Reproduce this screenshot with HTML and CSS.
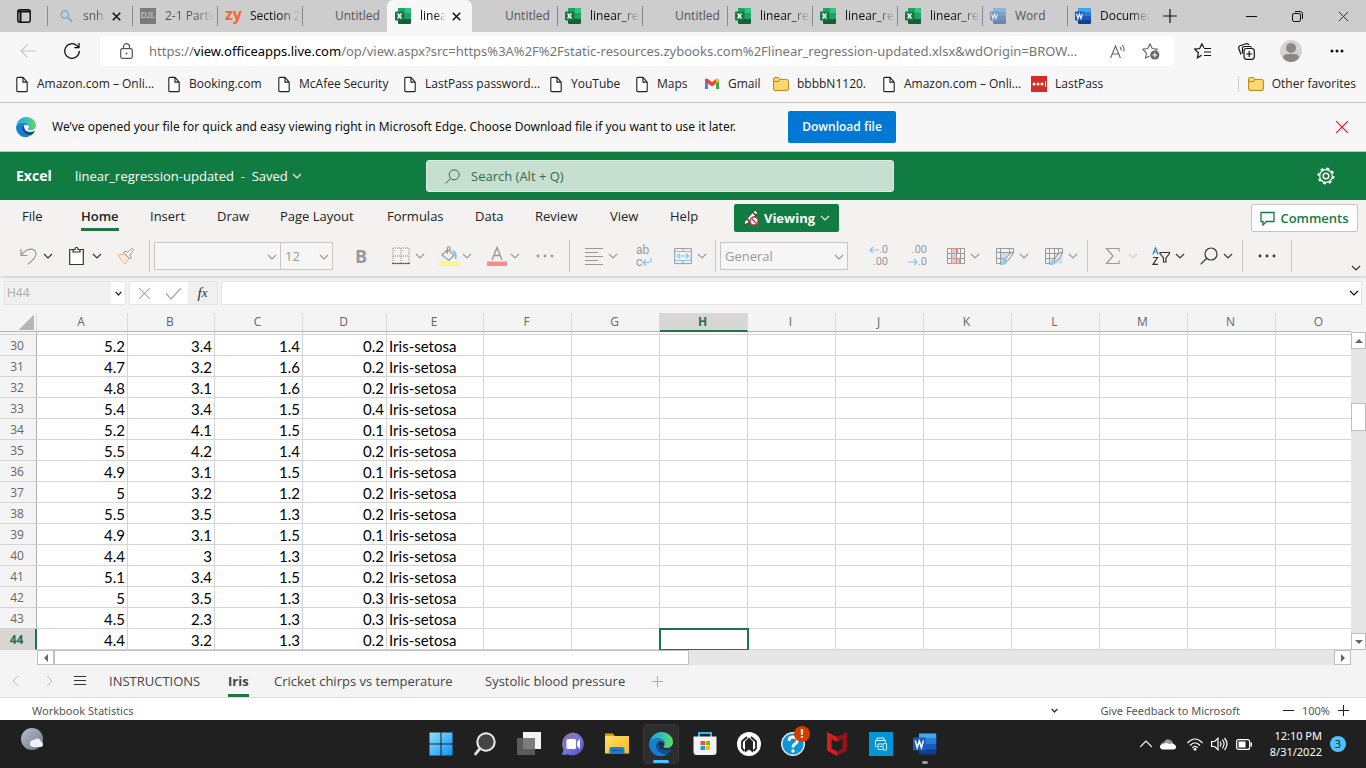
FILE: index.html
```html
<!DOCTYPE html>
<html lang="en">
<head>
<meta charset="utf-8">
<title>linear_regression-updated.xlsx</title>
<link rel="stylesheet" href="styles.css">
</head>
<body>
<svg class="defs" aria-hidden="true">
  <defs>
    <linearGradient id="win" x1="0" y1="0" x2="1" y2="1"><stop offset="0" stop-color="#8be0fb"/><stop offset="1" stop-color="#0d93f5"/></linearGradient>
    <linearGradient id="eg" x1="0" y1="0" x2="1" y2="0"><stop offset="0" stop-color="#1c9fe0"/><stop offset=".55" stop-color="#35c1b9"/><stop offset="1" stop-color="#62dc52"/></linearGradient>
    <linearGradient id="chat" x1="0" y1="0" x2="1" y2="1"><stop offset="0" stop-color="#9a6a9e"/><stop offset=".5" stop-color="#7478d6"/><stop offset="1" stop-color="#4f4fc4"/></linearGradient>
    <linearGradient id="fold" x1="0" y1="0" x2="1" y2="1"><stop offset="0" stop-color="#ffdf6b"/><stop offset="1" stop-color="#fbb81f"/></linearGradient>
    <linearGradient id="moon" x1="0" y1="0" x2="1" y2="1"><stop offset="0" stop-color="#b5bec9"/><stop offset="1" stop-color="#717b87"/></linearGradient>
  </defs>
  <symbol id="chev" viewBox="0 0 10 10"><path d="M1 3l4 4 4-4" fill="none" stroke="currentColor" stroke-width="1.2"/></symbol>
  <symbol id="x" viewBox="0 0 12 12"><path d="M1 1l10 10M11 1L1 11" fill="none" stroke="currentColor"/></symbol>
  <symbol id="page" viewBox="0 0 14 18"><path d="M1.500 2.500q0-1 1-1H8l4.500 5v9q0 1-1 1h-9q-1 0-1-1zM8 1.500v5h4.500" fill="#fff" stroke="#222" stroke-width="1.200"/></symbol>
  <symbol id="folder" viewBox="0 0 16 14"><path d="M.6 2q0-1.400 1.400-1.400h3.500L7 2.400h6.500q1.900 0 1.900 1.800V12q0 1.400-1.400 1.400H2Q.6 13.400.6 12z" fill="#ffd86f" stroke="#b8860b"/><path d="M.6 4.500h5L7 2.400" fill="none" stroke="#b8860b"/></symbol>
  <symbol id="excel" viewBox="0 0 16 16"><rect x="3" width="13" height="16" rx="1" fill="#185c37"/><path d="M3 0h6.500v5.500H3z" fill="#21a366"/><path d="M9.500 0H15q1 0 1 1v4.500H9.500z" fill="#33c481"/><path d="M3 5.500h6.500V11H3z" fill="#107c41"/><path d="M9.500 5.500H16V11H9.500z" fill="#21a366"/><rect y="3.500" width="9" height="9" rx=".8" fill="#107c41"/><path d="M2.600 5.500l3.800 5M6.400 5.500l-3.800 5" stroke="#fff" stroke-width="1.500"/></symbol>
  <symbol id="word" viewBox="0 0 16 16"><rect x="3" width="13" height="16" rx="1" fill="#103f91"/><path d="M3 1q0-1 1-1h11q1 0 1 1v3H3z" fill="#41a5ee"/><path d="M3 4h13v4H3z" fill="#2b7cd3"/><path d="M3 8h13v4H3z" fill="#185abd"/><rect y="3.500" width="9" height="9" rx=".8" fill="#185abd"/><path d="M1.500 5.600l1.500 5 1.500-4.600L6 10.600l1.500-5" fill="none" stroke="#fff" stroke-width="1.200"/></symbol>
  <symbol id="edge" viewBox="0 0 24 24"><path d="M0 12C1 5 6 0 12 0c7 0 12 4.500 12 10 0 4-3 6-6.500 6-2.500 0-3.500-1-3-2 1-1 1-2 1-2.500C15.500 8 12 6.500 9 6.500 4 6.500 1 9 0 12z" fill="url(#eg)"/><path d="M0 12C1.500 8 5 6.500 9 6.500c4 0 6.300 2.200 6.400 5-.2-1.300-3-3-5.400-2-2 1-3 4-2 7.500 2 4 6 5.500 10 5C13.500 25.500 6 24.500 3 20 .8 17.500 0 15 0 12z" fill="#1380d8"/><path d="M9.500 9.500C7 11 6.500 14 8 17c2 4 6 5.500 10 5 2-1 4-3 4.500-4.500.2-.6-.4-.8-1-.4-3 1.600-8 1.200-10-1.100-1.700-2-1.800-4.500-2-6.500z" fill="#124e96"/></symbol>
  <symbol id="dots" viewBox="0 0 18 4"><g fill="currentColor"><circle cx="2" cy="2" r="1.400"/><circle cx="9" cy="2" r="1.400"/><circle cx="16" cy="2" r="1.400"/></g></symbol>
  <symbol id="glass" viewBox="0 0 18 18"><g fill="none" stroke="currentColor" stroke-width="1.200"><circle cx="11" cy="7" r="6"/><path d="M6.500 11.500L.6 17.400"/></g></symbol>
  <symbol id="brush" viewBox="0 0 18 18"><path d="M17 5q-3 0-8 8l2 1.500Q17 9 17 5z" fill="#eee" stroke="#8f8f8f"/><path d="M8.500 12.500q-2 .5-2.500 2.500t-2 2.500q5 1.200 7-3z" fill="#9fc9ea" stroke="#82b4dc" stroke-width=".6"/></symbol>
</svg>

<header class="browser">
  <div class="tabstrip">
    <button class="tab-actions" aria-label="Tab actions"><svg width="14" height="14" viewBox="0 0 14 14"><rect x=".8" y=".8" width="12.400" height="12.400" rx="2" fill="none" stroke="#111" stroke-width="1.500"/><path d="M1 2.500h12M3.500 2v11" stroke="#111" stroke-width="2"/></svg></button>
    <nav class="tabs" id="tabs" aria-label="Browser tabs">
      <div class="tab first"><svg class="fav" viewBox="0 0 16 16"><circle cx="7" cy="6.500" r="3.700" fill="none" stroke="#7fa8d6" stroke-width="1.500"/><path d="M10 9.500l4 4" stroke="#7fa8d6" stroke-width="2"/></svg><a href="#" class="dim">snh</a><button aria-label="Close tab"><svg width="9" height="9" viewBox="0 0 12 12"><path d="M1 1l10 10M11 1L1 11" stroke="#111" stroke-width="2"/></svg></button></div>
      <div class="tab"><span class="fav d2l">D2L</span><a href="#" class="dim">2-1 Partic</a></div>
      <div class="tab"><span class="fav zy">zy</span><a href="#">Section 2</a></div>
      <div class="tab"><span class="fav"></span><a href="#" class="dim">Untitled</a></div>
      <div class="tab active"><svg class="fav"><use href="#excel"/></svg><a href="#">linea</a><button aria-label="Close tab"><svg width="9" height="9" viewBox="0 0 12 12"><path d="M1 1l10 10M11 1L1 11" stroke="#111" stroke-width="2"/></svg></button></div>
      <div class="tab after"><span class="fav"></span><a href="#" class="dim">Untitled</a></div>
      <div class="tab"><svg class="fav"><use href="#excel"/></svg><a href="#">linear_reg</a></div>
      <div class="tab"><span class="fav"></span><a href="#" class="dim">Untitled</a></div>
      <div class="tab"><svg class="fav"><use href="#excel"/></svg><a href="#">linear_reg</a></div>
      <div class="tab"><svg class="fav"><use href="#excel"/></svg><a href="#">linear_reg</a></div>
      <div class="tab"><svg class="fav"><use href="#excel"/></svg><a href="#">linear_reg</a></div>
      <div class="tab whole"><svg class="fav faded"><use href="#word"/></svg><a href="#" class="dim">Word</a></div>
      <div class="tab"><svg class="fav"><use href="#word"/></svg><a href="#">Documen</a></div>
    </nav>
    <button class="new-tab" aria-label="New tab"><svg width="14" height="14" viewBox="0 0 14 14"><path d="M7 0v14M0 7h14" stroke="#111" stroke-width="1.200"/></svg></button>
    <div class="window-buttons">
      <button aria-label="Minimize"><svg width="11" height="11"><path d="M0 5.500h11" stroke="#111"/></svg></button>
      <button aria-label="Restore"><svg width="11" height="11"><rect x=".5" y="2.500" width="8" height="8" rx="1.500" fill="none" stroke="#111"/><path d="M3 .5h5q2.500 0 2.500 2.500v5" fill="none" stroke="#111"/></svg></button>
      <button aria-label="Close"><svg width="11" height="11"><use href="#x"/></svg></button>
    </div>
  </div>

  <div class="navbar">
    <button aria-label="Back"><svg width="16" height="14" viewBox="0 0 16 14"><path d="M16 7H1M7.500.5L1 7l6.500 6.500" fill="none" stroke="#c8c8c8" stroke-width="1.200"/></svg></button>
    <button aria-label="Refresh"><svg width="18" height="18" viewBox="0 0 18 18"><path d="M16.300 9A7.300 7.300 0 1 1 14 3.700L16 5.500M16 1v4.700h-4.700" fill="none" stroke="#111" stroke-width="1.300"/></svg></button>
    <div class="address">
      <svg width="13" height="16" viewBox="0 0 13 16"><path d="M3.500 6V3.700a3 3 0 0 1 6 0V6" fill="none" stroke="#555" stroke-width="1.200"/><rect x=".7" y="5.700" width="11.600" height="9.600" rx="1.500" fill="none" stroke="#555" stroke-width="1.200"/><circle cx="6.500" cy="10.500" r="1" fill="#555"/></svg>
      <p class="url">https://<b>view.officeapps.live.com</b>/op/view.aspx?src=https%3A%2F%2Fstatic-resources.zybooks.com%2Flinear_regression-updated.xlsx&amp;wdOrigin=BROW...</p>
      <button aria-label="Read aloud"><svg width="16" height="15" viewBox="0 0 16 15"><path d="M.6 14L5.500 2l4.900 12M2.300 10h6.400M10 3q1.500 1.500 1 3.500M12 1.200q3 2.600 1.600 6.300" fill="none" stroke="#666" stroke-width="1.100"/></svg></button>
      <button aria-label="Add to favorites"><svg width="18" height="17" viewBox="0 0 18 17"><path d="M7.500 13L3.500 15.100l.9-5L.8 6.200l5-.7L8 .9l2.200 4.600 5 .7-1.500 1.500" fill="none" stroke="#666" stroke-width="1.100"/><circle cx="12.800" cy="12" r="4.600" fill="#666"/><path d="M12.800 9.500v5M10.300 12h5" stroke="#fff"/></svg></button>
    </div>
    <button aria-label="Favorites"><svg width="17" height="16" viewBox="0 0 17 16"><path d="M10 4.800L7.800.9 5.700 5.500l-5 .6 3.700 3.700-1 5 4.300-2.600" fill="none" stroke="#111" stroke-width="1.200"/><path d="M10 5.500h7M10 9h7M10 12.500h7" stroke="#111" stroke-width="1.200"/></svg></button>
    <button aria-label="Collections"><svg width="17" height="17" viewBox="0 0 17 17"><g fill="none" stroke="#111" stroke-width="1.200"><path d="M3 11.500L.8 5.500Q.3 3.500 2 2.800L8 .8q2-.5 3 1.200M4.500 10.500V5.500q0-2 2-2h5.500q1 0 1.500 1"/><rect x="6" y="5.500" width="10.300" height="10.800" rx="2.500"/><path d="M11.200 8v6M8.200 11h6"/></g></svg></button>
    <button aria-label="Profile"><svg width="22" height="22" viewBox="0 0 22 22"><circle cx="11" cy="11" r="11" fill="#d5d3d0"/><circle cx="11" cy="8" r="5" fill="#8b8986"/><path d="M3 18q0-4 5-4h6q5 0 5 4-3.500 4-8 4t-8-4z" fill="#8b8986"/></svg></button>
    <button aria-label="Settings and more"><svg width="14" height="4" viewBox="0 0 14 4"><g fill="#111"><circle cx="2" cy="2" r="1.500"/><circle cx="7" cy="2" r="1.500"/><circle cx="12" cy="2" r="1.500"/></g></svg></button>
  </div>

  <nav class="bookmarks" aria-label="Favorites bar">
    <a href="#"><svg class="pg"><use href="#page"/></svg>Amazon.com – Onli...</a>
    <a href="#"><svg class="pg"><use href="#page"/></svg>Booking.com</a>
    <a href="#"><svg class="pg"><use href="#page"/></svg>McAfee Security</a>
    <a href="#"><svg class="pg"><use href="#page"/></svg>LastPass password...</a>
    <a href="#"><svg class="pg"><use href="#page"/></svg>YouTube</a>
    <a href="#"><svg class="pg"><use href="#page"/></svg>Maps</a>
    <a href="#"><svg class="ic" viewBox="0 0 16 16"><path d="M1 3.500V13h3V7z" fill="#4285f4"/><path d="M15 3.500V13h-3V7z" fill="#34a853"/><path d="M1 3.200Q2.500 1.800 4 3l4 3.200L12 3v4.500L8 10.500 4 7.500 1 5z" fill="#ea4335"/><path d="M12 3q1.600-1.300 3 .3V5l-3 2.500z" fill="#fbbc04"/></svg>Gmail</a>
    <a href="#"><svg class="ic"><use href="#folder"/></svg>bbbbN1120.</a>
    <a href="#"><svg class="pg"><use href="#page"/></svg>Amazon.com – Onli...</a>
    <a href="#"><svg class="ic" viewBox="0 0 16 16"><path d="M0 0h16v16H0z" fill="#d32d27"/><g fill="#fff"><circle cx="3" cy="8" r="1.500"/><circle cx="7" cy="8" r="1.500"/><circle cx="11" cy="8" r="1.500"/><path d="M14 5h1v6h-1z"/></g></svg>LastPass</a>
    <a href="#" class="other"><svg class="ic"><use href="#folder"/></svg>Other favorites</a>
  </nav>
</header>

<section class="notice">
  <svg width="20" height="20"><use href="#edge"/></svg>
  <p>We’ve opened your file for quick and easy viewing right in Microsoft Edge. Choose Download file if you want to use it later.</p>
  <button class="download">Download file</button>
  <button class="dismiss" aria-label="Dismiss"><svg width="14" height="14"><use href="#x"/></svg></button>
</section>

<header class="titlebar">
  <b>Excel</b>
  <button class="doc">linear_regression-updated&nbsp; -&nbsp; Saved <svg width="10" height="10"><use href="#chev"/></svg></button>
  <label class="search"><svg width="15" height="15"><use href="#glass"/></svg><input type="search" placeholder="Search (Alt + Q)" aria-label="Search"></label>
  <button class="gear" aria-label="Settings"><svg width="18" height="18" viewBox="0 0 18 18"><g fill="none" stroke="#fff"><circle cx="9" cy="9" r="2.800" stroke-width="1.400"/><circle cx="9" cy="9" r="6.300" stroke-width="1.200"/><circle cx="9" cy="9" r="7.600" stroke-width="1.800" stroke-dasharray="3 2.970"/></g></svg></button>
</header>

<section class="ribbon">
  <nav class="menu" aria-label="Ribbon tabs">
    <a href="#">File</a><a href="#" class="current"><span>Home</span></a><a href="#">Insert</a><a href="#">Draw</a><a href="#">Page Layout</a><a href="#">Formulas</a><a href="#">Data</a><a href="#">Review</a><a href="#">View</a><a href="#">Help</a>
    <button class="viewing"><svg width="16" height="16" viewBox="0 0 16 16"><path d="M1 15l1-4L11 1q2-1 3 1t-1 3L5 13z" fill="#fff" stroke="#333" stroke-width=".8"/><path d="M4 9l3 3M10 2.500l3 3" stroke="#333" stroke-width="1.500"/><circle cx="11" cy="11" r="4" fill="#fff" stroke="#d13438" stroke-width="1.400"/><path d="M8.500 8.500l5 5" stroke="#d13438" stroke-width="1.400"/></svg>Viewing<svg class="c"><use href="#chev"/></svg></button>
    <button class="comments"><svg width="15" height="15" viewBox="0 0 15 15"><path d="M1 1.500h13v9H6.500L3 14v-3.500H1z" fill="none" stroke="#107c41" stroke-width="1.300"/></svg>Comments</button>
  </nav>
  <div class="tools">
    <button class="tool" aria-label="Undo"><svg class="i off" viewBox="0 0 18 18"><path d="M1 2v6.500h6.500M1.300 8Q6 2.500 10 2.200c4 0 6 2.300 6 5 0 3-3 6-8 10" fill="none" stroke="currentColor" stroke-width="1.200"/></svg><svg class="c"><use href="#chev"/></svg></button>
    <button class="tool" aria-label="Paste"><svg class="i" viewBox="0 0 18 18"><path d="M4 2.500H.7v15h13.600v-15H11M4 5V2.500h2q0-2 1.500-2t1.500 2h2V5z" fill="#fff" stroke="#333" stroke-width="1.200"/></svg><svg class="c"><use href="#chev"/></svg></button>
    <button class="tool" aria-label="Format painter"><svg class="i" viewBox="0 0 18 18"><path d="M1 8l6.500-1 4.500 4.500Q10 14 8 17q-3-2-7-9z" fill="#fde8d5" stroke="#e8b78d"/><path d="M6.500 5.500l6.500 6.500 1-2-1.300-2 4-5-1.700-1.700-4.500 4L8 4z" fill="#f5f5f5" stroke="#999"/></svg></button>
    <i class="sep"></i>
    <div class="combo"><select aria-label="Font" disabled><option></option></select><svg class="c"><use href="#chev"/></svg></div>
    <div class="combo size"><select aria-label="Font size" disabled><option>12</option></select><svg class="c"><use href="#chev"/></svg></div>
    <button class="tool bold off">B</button>
    <button class="tool off" aria-label="Borders"><svg class="i" viewBox="0 0 18 18"><path d="M1 1h16M1 9h16M1 1v15M9 1v15M17 1v15" stroke="#888" stroke-dasharray="1 1"/><path d="M0 16.500h18" stroke="#666" stroke-width="1.200"/></svg><svg class="c"><use href="#chev"/></svg></button>
    <button class="tool off" aria-label="Fill color"><svg class="i w" viewBox="0 0 20 20"><path d="M3 9l5.500-5.500L15 9l-5 5.500zM8.500 8V1.500q1.500-1.500 2.500 0V6" fill="none" stroke="#999" stroke-width="1.200"/><path d="M13 5q4.500 0 3.500 8" fill="none" stroke="#8dbce2" stroke-width="2"/><path d="M0 15.500h20v4.500H0z" fill="#fbf58d"/></svg><svg class="c"><use href="#chev"/></svg></button>
    <button class="tool off" aria-label="Font color"><svg class="i w" viewBox="0 0 20 20"><path d="M5 14L10 1.500 15 14M7 9.500h6" fill="none" stroke="#999" stroke-width="1.400"/><path d="M0 15.500h20v4.500H0z" fill="#f78d8d"/></svg><svg class="c"><use href="#chev"/></svg></button>
    <button class="tool off" aria-label="More font options"><svg width="18" height="4"><use href="#dots"/></svg></button>
    <i class="sep"></i>
    <button class="tool off" aria-label="Align"><svg class="i" viewBox="0 0 18 18"><path d="M0 1.500h18M0 5.500h13M0 9.500h18M0 13.500h13M0 17.500h18" stroke="#999"/></svg><svg class="c"><use href="#chev"/></svg></button>
    <button class="tool off wrap" aria-label="Wrap text"><span>ab</span><span>c<svg width="10" height="8" viewBox="0 0 10 8"><path d="M9 0q1 4-3 4.500H1M4 1.500l-3 3 3 3" fill="none" stroke="#8dc3ea" stroke-width="1.200"/></svg></span></button>
    <button class="tool off" aria-label="Merge"><svg class="i" viewBox="0 0 18 18"><path d="M.6 1.600h16.800v15H.6zM9 1.500v15" fill="none" stroke="#999"/><path d="M1 4.500h16v9H1z" fill="#f3f2f1" stroke="#8dc3ea"/><path d="M3.500 9h11M6 6.500L3.500 9 6 11.500M12 6.500L14.500 9 12 11.500" fill="none" stroke="#8dc3ea" stroke-width="1.200"/></svg><svg class="c"><use href="#chev"/></svg></button>
    <i class="sep"></i>
    <div class="combo general"><select aria-label="Number format" disabled><option>General</option></select><svg class="c"><use href="#chev"/></svg></div>
    <button class="tool off dec" aria-label="Decrease decimal"><span><svg width="10" height="8" viewBox="0 0 10 8"><path d="M10 4H1M4 1L1 4l3 3" fill="none" stroke="#8dc3ea" stroke-width="1.200"/></svg>.0</span><span>.00</span></button>
    <button class="tool off dec" aria-label="Increase decimal"><span>.00</span><span><svg width="10" height="8" viewBox="0 0 10 8"><path d="M0 4h9M6 1l3 3-3 3" fill="none" stroke="#8dc3ea" stroke-width="1.200"/></svg>.0</span></button>
    <button class="tool off" aria-label="Conditional formatting"><svg class="i" viewBox="0 0 18 18"><path d="M5 1h5v5H5zM4 11h8v6H4z" fill="#f9c3c3"/><path d="M5 6h4v5H5z" fill="#b5d6ef"/><path d="M.5 1.500h17v15H.5zM.5 6.500h17M.5 11.500h17M4.500 1.500v15M9.500 1.500v15M13.500 1.500v15" fill="none" stroke="#999"/><path d="M4.500 1.500h6v5h-6zM4.500 11.500h8v5h-8z" fill="none" stroke="#e88"/></svg><svg class="c"><use href="#chev"/></svg></button>
    <button class="tool off" aria-label="Format as table"><svg class="i" viewBox="0 0 18 18"><path d="M4.500 5.500h9v8h-9z" fill="#c5def2"/><path d="M8 16.500H.5v-15h17v5M.5 5.500h17M.5 11.500h8M4.500 1.500v15M13.500 1.500v6" fill="none" stroke="#999"/><use href="#brush"/></svg><svg class="c"><use href="#chev"/></svg></button>
    <button class="tool off" aria-label="Cell styles"><svg class="i" viewBox="0 0 18 18"><path d="M9 6.500h8.500v10H9z" fill="#c5def2"/><path d="M8 16.500H.5v-15h17v5M.5 6.500h17M.5 11.500h12M4.500 1.500v15M9.500 1.500v12M13.500 1.500v6" fill="none" stroke="#999"/><use href="#brush"/></svg><svg class="c"><use href="#chev"/></svg></button>
    <i class="sep"></i>
    <button class="tool off pale" aria-label="AutoSum"><svg class="i" viewBox="0 0 18 18"><path d="M14 4.500v-3H1.500l6.500 7.500-6.500 7.500H14v-3" fill="none" stroke="#999" stroke-width="1.200"/></svg><svg class="c"><use href="#chev"/></svg></button>
    <button class="tool" aria-label="Sort and filter"><svg class="i" viewBox="0 0 18 18"><path d="M.8 7.500L3.500.7l2.700 6.800M1.800 5h3.500" fill="none" stroke="#2b88d8" stroke-width="1.200"/><path d="M1 10.500h4.500L1 17.300h5M8 5.500h9.500v1l-3.500 4.500v4h-2.500v-4L8 6.500z" fill="none" stroke="#333" stroke-width="1.200"/></svg><svg class="c"><use href="#chev"/></svg></button>
    <button class="tool" aria-label="Find"><svg class="i"><use href="#glass"/></svg><svg class="c"><use href="#chev"/></svg></button>
    <i class="sep"></i>
    <button class="tool" aria-label="More commands"><svg width="18" height="4"><use href="#dots"/></svg></button>
    <i class="sep"></i>
    <button class="tool collapse" aria-label="Collapse ribbon"><svg class="c"><use href="#chev"/></svg></button>
  </div>
</section>

<main class="workbook">
  <div class="formula-row">
    <div class="namebox"><input value="H44" aria-label="Name box" disabled><button aria-label="Named ranges"><svg width="7" height="7" viewBox="0 0 10 10"><path d="M1 3l4 4 4-4" fill="none" stroke="#333" stroke-width="2"/></svg></button></div>
    <div class="fx-buttons">
      <button aria-label="Cancel"><svg width="13" height="13" viewBox="0 0 12 12"><path d="M1 1l10 10M11 1L1 11" stroke="#aaa"/></svg></button>
      <button aria-label="Enter"><svg width="17" height="13" viewBox="0 0 17 13"><path d="M1 6.500L6 12 16 1" fill="none" stroke="#aaa" stroke-width="1.300"/></svg></button>
      <button class="fx" aria-label="Insert function">f<small>x</small></button>
    </div>
    <div class="formula"><input aria-label="Formula bar"><button aria-label="Expand formula bar"><svg class="c"><use href="#chev"/></svg></button></div>
  </div>

  <div class="sheet">
    <div class="cells">
      <table>
        <colgroup><col class="cr"><col class="ca"><col class="cb"><col class="cc"><col class="cd"><col class="ce"><col span="10" class="cf"></colgroup>
        <thead><tr id="letters"><th class="corner" aria-label="Select all"></th></tr></thead>
        <tbody id="rows"></tbody>
      </table>
    </div>
    <div class="vscroll"><button aria-label="Scroll up"><i class="up"></i></button><i class="vthumb"></i><button aria-label="Scroll down"><i class="down"></i></button></div>
  </div>
  <div class="hscroll"><button aria-label="Scroll left"><i class="left"></i></button><i class="hthumb"></i><button aria-label="Scroll right"><i class="right"></i></button></div>

  <nav class="sheet-tabs" aria-label="Sheets">
    <button aria-label="Previous sheet"><svg width="7" height="12" viewBox="0 0 7 12"><path d="M6 1L1 6l5 5" fill="none" stroke="#bbb"/></svg></button>
    <button aria-label="Next sheet"><svg width="7" height="12" viewBox="0 0 7 12"><path d="M1 1l5 5-5 5" fill="none" stroke="#bbb"/></svg></button>
    <button aria-label="All sheets"><svg width="12" height="10"><path d="M0 .5h12M0 4.500h12M0 8.500h12" stroke="#333"/></svg></button>
    <a href="#">INSTRUCTIONS</a><a href="#" class="current"><span>Iris</span></a><a href="#">Cricket chirps vs temperature</a><a href="#">Systolic blood pressure</a>
    <button aria-label="Add sheet"><svg width="11" height="11"><path d="M5.500 0v11M0 5.500h11" stroke="#aaa"/></svg></button>
  </nav>
</main>

<footer class="status">
  <a href="#">Workbook Statistics</a>
  <button class="caret" aria-label="Status options"><svg width="7" height="7" viewBox="0 0 10 10"><path d="M1 3l4 4 4-4" fill="none" stroke="#333" stroke-width="2"/></svg></button>
  <a href="#">Give Feedback to Microsoft</a>
  <div class="zoom"><button aria-label="Zoom out"><svg width="11" height="11"><path d="M0 5.500h11" stroke="#222"/></svg></button><span>100%</span><button aria-label="Zoom in"><svg width="11" height="11"><path d="M5.500 0v11M0 5.500h11" stroke="#222"/></svg></button></div>
</footer>

<footer class="taskbar">
  <button class="weather" aria-label="Weather"><svg width="24" height="24" viewBox="0 0 24 24"><circle cx="11" cy="11" r="11" fill="url(#moon)"/><path d="M12 19a3.500 3.500 0 0 1 1-7 4 4 0 0 1 7 1.500 3 3 0 0 1 .5 5.500z" fill="#eef0f2"/></svg></button>
  <div class="apps">
    <button aria-label="Start"><svg viewBox="0 0 24 24"><path d="M.5.500h11v11H.5zM12.500.500h11v11h-11zM.5 12.500h11v11H.5zM12.500 12.500h11v11h-11z" fill="url(#win)"/></svg></button>
    <button aria-label="Search"><svg viewBox="0 0 24 24"><circle cx="13" cy="10" r="8.700" fill="#444" stroke="#eee" stroke-width="2"/><path d="M7 16.500L2.500 22" stroke="#ddd" stroke-width="2.800" stroke-linecap="round"/></svg></button>
    <button aria-label="Task view"><svg viewBox="0 0 24 24"><path d="M6 0h18v17H6z" fill="#f3f3f3"/><path d="M0 6h18v17H0z" fill="#666" opacity=".85"/></svg></button>
    <button aria-label="Chat"><svg viewBox="0 0 24 24"><path d="M12 .5a11.400 11.400 0 1 1-5 21.900L1 23l1.500-5.500A11.400 11.400 0 0 1 12 .5z" fill="url(#chat)"/><rect x="5.500" y="7" width="9.500" height="10" rx="1.500" fill="#fff"/><path d="M16 10l3-3v10l-3-3z" fill="#fff"/></svg></button>
    <button aria-label="File Explorer"><svg viewBox="0 0 24 24"><path d="M0 1.500h8l2 3h-10z" fill="#e3a008"/><path d="M0 4h24v17.500H0z" fill="url(#fold)"/><path d="M4.500 22v-5q0-2 2-2h11q2 0 2 2v5z" fill="#1480d0"/><path d="M7 18.500h10" stroke="#0a5a9c"/></svg></button>
    <button class="open" aria-label="Microsoft Edge"><svg viewBox="0 0 24 24"><use href="#edge"/></svg></button>
    <button aria-label="Microsoft Store"><svg viewBox="0 0 24 24"><path d="M6 5V1h12v4" fill="none" stroke="#35b5ee" stroke-width="2"/><path d="M.5 4.500h23V20q0 3-3 3h-17q-3 0-3-3z" fill="#f3f3f3"/><path d="M7.500 9H12v4H7.500z" fill="#f25022"/><path d="M13 9h4v4h-4z" fill="#7fba00"/><path d="M7.500 14H12v4H7.500z" fill="#00a4ef"/><path d="M13 14h4v4h-4z" fill="#ffb900"/></svg></button>
    <button aria-label="Support"><svg viewBox="0 0 24 24"><circle cx="12" cy="12" r="12" fill="#fff"/><path d="M7.500 19L5 16.500v-7L10 5M16.500 19l2.500-2.500v-7L14 5" fill="none" stroke="#222" stroke-width="1.800"/><path d="M8 20.500V9.500L12 5.500l4 4v11l-4-3z" fill="#222"/><path d="M10 17V10.500L12 8.500l2 2V17l-2-1.500z" fill="#222"/></svg></button>
    <button class="alert" aria-label="Help, attention needed"><svg viewBox="0 0 24 24"><circle cx="12" cy="12" r="11.300" fill="#0d95d5" stroke="#dce8ee" stroke-width="1.500"/><path d="M8 9q0-4 4-4 4.500 0 4.500 3.500 0 2-2.500 3.500-2 1-2 3.500" fill="none" stroke="#fff" stroke-width="2.800"/><circle cx="12" cy="19" r="1.700" fill="#fff"/></svg><b>!</b></button>
    <button aria-label="McAfee"><svg viewBox="0 0 24 24"><path d="M2 0l10 5v5L6.500 7v9.500L12 19.500V24L2 18.500z" fill="#d51f26"/><path d="M22 0L12 5v5l5.500-3v9.500L12 19.500V24l10-5.500z" fill="#8f1519"/></svg></button>
    <button aria-label="HP Smart"><svg viewBox="0 0 24 24"><path d="M0 0h24v24H0z" fill="#0096d6"/><g fill="none" stroke="#d9f1fc"><path d="M8 8V6h7v2M8 14.500H6.500V8.500h10v2M9 17.500v-5.500h4M9 17.500h4M10.500 14.500h2.500M14 11.500h3.500v6.500H14z"/></g></svg></button>
    <button class="running" aria-label="Word"><svg viewBox="0 0 16 16"><path d="M4 1h11.500v14H4z" fill="#103f91"/><path d="M4 1h11.500v3.500H4z" fill="#41a5ee"/><path d="M4 4.500h11.500V8H4z" fill="#2b7cd3"/><path d="M4 8h11.500v3.500H4z" fill="#185abd"/><path d="M0 3.700h8.500v8.500H0z" fill="#185abd"/><path d="M1.500 5.600l1.300 4.800 1.400-4.400 1.400 4.400 1.400-4.800" fill="none" stroke="#fff"/></svg></button>
  </div>
  <div class="tray">
    <button aria-label="Show hidden icons"><svg width="12" height="12" viewBox="0 0 12 12"><path d="M0 9l6-6 6 6" fill="none" stroke="#fff" stroke-width="1.200"/></svg></button>
    <svg width="16" height="12" viewBox="0 0 16 12"><path d="M1 8Q0 5 4 4q2-4 6-2 3 1 3 4z" fill="#9a9a9a"/><path d="M3 11.500q-3-.5-3-3T4 6q2-2 5 0l3-.5q4 1 4 3.500T13 11.500z" fill="#fff"/></svg>
    <svg width="16" height="13" viewBox="0 0 16 13"><g fill="none" stroke="#fff" stroke-width="1.200"><path d="M.5 5q7.500-8 15 0M3 7.500q5-5.500 10 0M5.300 9.800q2.700-3 5.400 0"/></g><circle cx="8" cy="11.300" r="1.400" fill="#fff"/></svg>
    <svg width="17" height="14" viewBox="0 0 17 14"><path d="M.6 4.500h3L7 1.300v11.400L3.600 9.500h-3zM9 4.500q2 2.500 0 5M11.300 2.500q3.500 4.500 0 9M13.500 1q5 6 0 12" fill="none" stroke="#fff" stroke-width="1.200"/></svg>
    <svg width="16" height="11" viewBox="0 0 16 11"><rect x=".6" y=".6" width="13" height="9.800" rx="2" fill="none" stroke="#fff" stroke-width="1.200"/><path d="M2.500 2.500h7v6h-7zM14.500 3.500H16v4h-1.500z" fill="#fff"/></svg>
    <div class="clock"><time>12:10 PM</time><time>8/31/2022</time></div>
    <span class="count">3</span>
  </div>
</footer>
<script src="grid.js"></script>
</body>
</html>
```

FILE: styles.css
```css
* { box-sizing: border-box; }
:root { --green: #107c41; --line: #d4d4d4; --ui: "Open Sans", "Noto Sans", sans-serif; --wide: "Noto Sans", "Open Sans", sans-serif; }
body { margin: 0; height: 100vh; display: flex; flex-direction: column; overflow: hidden; background: #f3f3f3; font: 12px/16px var(--ui); color: #222; }
button, input, select { font: inherit; color: inherit; background: none; border: 0; padding: 0; margin: 0; }
button { display: inline-flex; align-items: center; justify-content: center; }
a { color: inherit; text-decoration: none; white-space: nowrap; }
p { margin: 0; }
svg { flex: none; display: block; }
.defs { position: absolute; width: 0; height: 0; }
.c { width: 10px; height: 10px; }

/* Browser */
.browser { background: #f7f7f7; border-bottom: 1px solid #c4c4c4; }
.tabstrip { display: flex; height: 32px; background: #cdcdcd; }
.tab-actions { width: 47px; flex: none; }
.tabs { display: grid; grid-auto-flow: column; grid-auto-columns: minmax(0, 1fr); flex: 0 1 1105px; min-width: 0; }
.tab { display: flex; align-items: center; gap: 9px; padding: 0 2px 0 8px; background: linear-gradient(#8a8a8a, #8a8a8a) 0 6px / 1px 20px no-repeat; }
.tab a { flex: 1; min-width: 0; overflow: hidden; -webkit-mask-image: linear-gradient(90deg, #000 60%, transparent); mask-image: linear-gradient(90deg, #000 60%, transparent); color: #111; }
.tab .dim { color: #555; }
.tab:has(span.fav:empty) a, .tab.whole a { -webkit-mask-image: none; mask-image: none; }
.tab.first { padding-left: 11px; }
.tab.active { background: #f7f7f7; border-radius: 6px 6px 0 0; }
.tab.after { background: none; }
.tab button { width: 20px; margin: 0 4px 0 -9px; }
.fav { width: 16px; height: 16px; flex: none; }
.faded { opacity: .5; }
.d2l { background: #7b7b7b; color: #ddd; font: 8px/16px "Liberation Serif", serif; text-align: center; }
.zy { color: #f26b2a; font: bold 16px/12px var(--ui); }
.new-tab { width: 36px; }
.window-buttons { margin-left: auto; display: flex; }
.window-buttons button { width: 46px; }
.navbar { display: grid; grid-template-columns: 44px 44px 1fr 44px 44px 46px 46px; align-items: center; height: 38px; padding: 0 6px; }
.navbar > .address { margin: 0 6px; }
.address { display: flex; align-items: center; gap: 16px; height: 30px; padding: 0 14px 0 20px; background: #fff; border-radius: 4px; min-width: 0; }
.url { flex: 1; min-width: 0; overflow: hidden; white-space: nowrap; font: 13px/20px var(--wide); color: #767676; }
.url b { font-weight: 400; color: #000; }
.bookmarks { display: grid; grid-template-columns: 152px 110px 126px 146px 86px 69px 69px 109px 149px 1fr auto; align-items: center; height: 32px; padding: 0 10px 4px 15px; }
.bookmarks a { display: flex; align-items: center; gap: 8px; }
.pg { width: 14px; height: 17px; }
.ic { width: 16px; height: 16px; }
.other { border-left: 1px solid #ccc; padding-left: 9px; }

/* Notice */
.notice { display: flex; align-items: center; height: 49px; padding: 0 17px 0 16px; background: #f7f7f7; border-bottom: 1px solid #c4c4c4; }
.notice p { margin-left: 16px; flex: 0 0 736px; color: #111; font-family: var(--wide); }
.download { height: 32px; width: 108px; background: #0078d4; color: #fff; font-weight: 600; border-radius: 2px; }
.dismiss { margin-left: auto; color: #e81123; }

/* Title bar */
.titlebar { display: grid; grid-template-columns: 59px 351px minmax(0, 468px) 1fr; align-items: center; height: 48px; padding: 0 31px 0 16px; background: var(--green); color: #fff; font-size: 13px; }
.titlebar b { font-size: 14px; }
.doc { justify-self: start; gap: 4px; white-space: nowrap; }
.search { display: flex; align-items: center; gap: 11px; height: 32px; padding: 0 18px; background: #c7dfd1; border: 1px solid #dcebe2; border-radius: 3px; color: #33694d; }
.search input { flex: 1; outline: 0; }
.search input::placeholder { color: #33694d; opacity: 1; }
.gear { justify-self: end; }

/* Ribbon */
.ribbon { height: 76px; background: #f3f2f1; box-shadow: 0 1px 3px #0003; position: relative; }
.menu { display: grid; grid-template-columns: 59px 69px 67px 63px 107px 88px 60px 75px 60px 64px 105px 1fr; align-items: center; height: 36px; padding: 0 8px 0 22px; font-size: 13px; }
.menu a { padding-bottom: 4px; }
.menu .current { font-weight: 600; }
.menu .current span, .sheet-tabs .current span { display: inline-block; border-bottom: 3px solid #217346; }
.menu .current span { padding: 7px 0 4px; }
.viewing { height: 28px; gap: 5px; background: var(--green); color: #fff; font-weight: 700; border-radius: 2px; }
.comments { justify-self: end; width: 107px; height: 28px; gap: 5px; background: #fff; border: 1px solid #c8c6c4; border-radius: 2px; color: var(--green); font-weight: 600; }
.tools { display: grid; grid-template-columns: 49px 48px 32px 5px 127px 74px 37px 47px 48px 49px 33px 16px 51px 38px 41px 5px 148px 39px 40px 49px 49px 42px 18px 47px 48px 42px 16px 33px 60px 1fr; align-items: center; height: 40px; padding-left: 20px; }
.tool { justify-content: flex-start; gap: 5px; height: 32px; color: #333; }
.tool .i { width: 18px; height: 18px; }
.tool .w { width: 20px; height: 20px; margin-right: -2px; }
.off { color: #999; }
.pale .c { opacity: .4; }
.bold { font-weight: 700; font-size: 18px; }
.sep { width: 1px; height: 32px; background: #c8c6c4; }
.combo { position: relative; height: 28px; border: 1px solid #c8c6c4; background: #f6f6f6; color: #999; }
.combo select { width: 100%; height: 100%; padding: 0 4px; appearance: none; color: #999; opacity: 1; font-size: 13px; }
.combo .c { position: absolute; right: 3px; top: 9px; pointer-events: none; }
.size { width: 52px; border-left: 0; }
.general { width: 128px; }
.wrap, .dec { flex-direction: column; align-items: flex-start; justify-content: center; gap: 0; line-height: 12px; font-family: Roboto, var(--ui); }
.wrap { font-size: 12px; }
.wrap span, .dec span { display: flex; align-items: center; }
.dec { font-size: 11px; width: 20px; align-items: flex-end; }
.collapse { justify-self: start; align-self: end; height: 16px; }

/* Formula row */
.workbook { flex: 1; min-height: 0; display: flex; flex-direction: column; background: #f4f4f4; }
.formula-row { display: grid; grid-template-columns: 122px 89px 1fr; gap: 3px; padding: 5px 4px 8px; height: 37px; }
.formula-row > div { display: flex; border: 1px solid #e3e3e3; background: #fff; height: 24px; }
.namebox input { flex: 1; min-width: 0; padding: 0 2px; background: #f0f0f0; color: #aaa; font-size: 12px; }
.namebox button { width: 14px; }
.fx-buttons button { flex: 1; }
.fx-buttons .fx { background: #f0f0f0; color: #333; font: italic 15px "Liberation Serif", serif; }
.fx small { font-size: 13px; }
.formula input { flex: 1; outline: 0; }
.formula button { width: 14px; color: #111; }

/* Grid */
.sheet { flex: 1; min-height: 0; display: grid; grid-template-columns: 1fr 15px; }
.cells { overflow: hidden; min-width: 0; }
table { table-layout: fixed; border-collapse: separate; border-spacing: 0; width: 1364px; background: #fff; font: 15px/18px Lato, "Open Sans", sans-serif; color: #000; }
.cr { width: 37px; } .ca { width: 91px; } .cb { width: 87px; } .cc { width: 88px; } .cd { width: 84px; } .ce { width: 97px; } .cf { width: 88px; }
th, td { padding: 1px 2px 0; height: 21px; border-right: 1px solid var(--line); border-bottom: 1px solid var(--line); text-align: right; white-space: nowrap; line-height: 18px; }
th { background: #f4f4f4; color: #666; font: 12px/18px var(--ui); text-align: center; }
thead th { height: 19px; padding: 0 3px 0 1px; line-height: 16px; border-color: #dadada; border-bottom-color: #b3b3b3; }
tbody th { border-right-color: #b3b3b3; padding-right: 4px; }
.text { text-align: left; }
.sliver > * { height: 3px; line-height: 1px; padding: 0; }
.corner { background: linear-gradient(135deg, transparent 50%, #b5b5b5 50%) 19px 2px / 15px 15px no-repeat #f4f4f4; }
thead .on { background: #d8d7d6; color: #217346; font-weight: 700; border-bottom: 2px solid #217346; }
tbody .on { background: #d8d7d6; color: #217346; font-weight: 700; border-right: 2px solid #217346; }
.selected { outline: 2px solid #217346; outline-offset: -1px; }
.vscroll { margin-top: 19px; display: flex; flex-direction: column; background: #e6e6e6; }
.vscroll button, .hscroll button, .vthumb, .hthumb { background: #fff; border: 1px solid #bfbfbf; }
.vscroll button { height: 17px; }
.vscroll button:last-child { margin-top: auto; }
.vthumb { height: 28px; margin-top: 54px; }
.hscroll { display: flex; height: 15px; margin: 0 15px 0 37px; background: #e6e6e6; }
.hscroll button { width: 17px; }
.hthumb { width: 635px; }
.hscroll button:last-child { margin-left: auto; }
.up, .down, .left, .right { border: 4px solid transparent; }
.up { border-bottom-color: #666; border-top: 0; }
.down { border-top-color: #666; border-bottom: 0; }
.left { border-right-color: #666; border-left: 0; }
.right { border-left-color: #666; border-right: 0; }
.sheet-tabs { display: grid; grid-template-columns: 34px 28px 35px 119px 46px 211px 167px 11px; align-items: center; height: 33px; padding-left: 12px; border-bottom: 1px solid #dedede; font-size: 13px; color: #444; }
.sheet-tabs button { justify-self: start; }
.sheet-tabs .current { font-weight: 700; color: #444; }
.sheet-tabs .current span { padding: 7px 0 5px; }

/* Status bar */
.status { display: flex; align-items: center; height: 22px; padding: 3px 17px 0 32px; background: #fff; color: #555; font: 11px/16px var(--wide); }
.caret { margin-left: auto; margin-right: 42px; }
.zoom { display: flex; align-items: center; gap: 8px; margin-left: 43px; }

/* Taskbar */
.taskbar { display: grid; grid-template-columns: 1fr auto 1fr; align-items: center; height: 48px; background: #202020; color: #fff; }
.weather { justify-self: start; margin: 0 0 8px 21px; }
.apps { display: flex; }
.apps button { position: relative; width: 44px; height: 40px; }
.apps svg { width: 24px; height: 24px; }
.apps .open { background: #2d2d2d; border: 1px solid #393939; border-radius: 4px; width: 36px; margin: 0 4px; }
.open::after, .running::after { content: ""; position: absolute; left: 50%; bottom: 0; width: 16px; height: 3px; margin-left: -8px; border-radius: 2px; background: #4cc2ff; }
.running::after { width: 6px; margin-left: -3px; background: #999; }
.alert b { position: absolute; top: 2px; right: 5px; width: 16px; height: 16px; border-radius: 50%; background: #d83b01; }
.tray { justify-self: end; display: flex; align-items: center; gap: 8px; padding-right: 20px; }
.tray > svg + svg { margin-left: 3px; }
.tray > svg + svg + svg { margin-left: 0; }
.clock { display: flex; flex-direction: column; text-align: right; width: 62px; font: 11px/16px var(--wide); }
.count { width: 16px; height: 16px; border-radius: 50%; background: #4cc2ff; color: #111; text-align: center; font-size: 11px; }
```

FILE: grid.js
```js
const letters = "ABCDEFGHIJKLMNO".split("");
const data = {
  30: [5.2, 3.4, 1.4, 0.2], 31: [4.7, 3.2, 1.6, 0.2], 32: [4.8, 3.1, 1.6, 0.2],
  33: [5.4, 3.4, 1.5, 0.4], 34: [5.2, 4.1, 1.5, 0.1], 35: [5.5, 4.2, 1.4, 0.2],
  36: [4.9, 3.1, 1.5, 0.1], 37: [5, 3.2, 1.2, 0.2], 38: [5.5, 3.5, 1.3, 0.2],
  39: [4.9, 3.1, 1.5, 0.1], 40: [4.4, 3, 1.3, 0.2], 41: [5.1, 3.4, 1.5, 0.2],
  42: [5, 3.5, 1.3, 0.3], 43: [4.5, 2.3, 1.3, 0.3], 44: [4.4, 3.2, 1.3, 0.2]
};
const active = { col: "H", row: "44" };

const add = (row, tag, text, cls) => {
  const cell = document.createElement(tag);
  cell.textContent = text;
  if (cls) cell.className = cls;
  row.append(cell);
};

const head = document.getElementById("letters");
letters.forEach(l => add(head, "th", l, l === active.col ? "on" : ""));

const body = document.getElementById("rows");
const sliver = body.insertRow();
sliver.className = "sliver";
add(sliver, "th", "");
letters.forEach(() => add(sliver, "td", ""));

for (const [n, values] of Object.entries(data)) {
  const row = body.insertRow();
  add(row, "th", n, n === active.row ? "on" : "");
  letters.forEach((l, i) => {
    if (i < 4) add(row, "td", values[i]);
    else if (i === 4) add(row, "td", "Iris-setosa", "text");
    else add(row, "td", "", l === active.col && n === active.row ? "selected" : "");
  });
}
```
